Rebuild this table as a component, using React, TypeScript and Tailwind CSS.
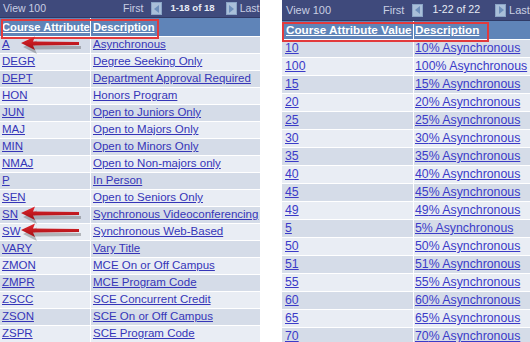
import React from 'react';

const attributes = [
  ['A', 'Asynchronous'],
  ['DEGR', 'Degree Seeking Only'],
  ['DEPT', 'Department Approval Required'],
  ['HON', 'Honors Program'],
  ['JUN', 'Open to Juniors Only'],
  ['MAJ', 'Open to Majors Only'],
  ['MIN', 'Open to Minors Only'],
  ['NMAJ', 'Open to Non-majors only'],
  ['P', 'In Person'],
  ['SEN', 'Open to Seniors Only'],
  ['SN', 'Synchronous Videoconferencing'],
  ['SW', 'Synchronous Web-Based'],
  ['VARY', 'Vary Title'],
  ['ZMON', 'MCE On or Off Campus'],
  ['ZMPR', 'MCE Program Code'],
  ['ZSCC', 'SCE Concurrent Credit'],
  ['ZSON', 'SCE On or Off Campus'],
  ['ZSPR', 'SCE Program Code'],
];

const values = ['10', '100', '15', '20', '25', '30', '35', '40', '45', '49', '5', '50', '51', '55', '60', '65', '70'];

function NavButton({ dir }: { dir: 'left' | 'right' }) {
  return (
    <span className="flex w-[11px] h-[13px] items-center justify-center bg-[#a9bfd9] border border-[#8aa4c6]">
      <svg width="6" height="8" viewBox="0 0 6 8">
        {dir === 'left' ? (
          <polygon points="5,0 5,8 0,4" fill="#6e8fbb" />
        ) : (
          <polygon points="1,0 1,8 6,4" fill="#6e8fbb" />
        )}
      </svg>
    </span>
  );
}

function Arrow({ className }: { className: string }) {
  return (
    <svg className={className} width="64" height="20" viewBox="0 0 64 20">
      <defs>
        <linearGradient id="shaft" x1="0" y1="0" x2="0" y2="1">
          <stop offset="0" stopColor="#e3262c" />
          <stop offset="1" stopColor="#a30e14" />
        </linearGradient>
      </defs>
      <g opacity="0.3" transform="translate(2,4)">
        <polygon points="0,7 14,0.5 12,5.5 58,6 58,9 12,9.5 14,14" fill="#333" />
      </g>
      <polygon points="0,7 14,0.5 12,5.5 58,6 58,9 12,9.5 14,14" fill="url(#shaft)" />
    </svg>
  );
}

export default function App() {
  return (
    <div className="w-[530px] h-[342px] overflow-hidden bg-white flex font-['Liberation_Sans',Arial,sans-serif]">
      {/* left table */}
      <div className="relative w-[260px] shrink-0 text-[11.5px] overflow-hidden">
        <div className="h-[18px] bg-[#3f4a7c] text-[#c9cfe3] text-[10.5px] flex items-center pl-[3px] border-b border-[#2f3a66] whitespace-nowrap">
          <span className="w-[120px] shrink-0">View 100</span>
          <span className="shrink-0">First</span>
          <span className="ml-[8px] shrink-0"><NavButton dir="left" /></span>
          <span className="ml-[8px] shrink-0 text-[#e6eaf4] font-bold text-[9.6px]">1-18 of 18</span>
          <span className="ml-[11px] shrink-0"><NavButton dir="right" /></span>
          <span className="ml-[3px] shrink-0">Last</span>
        </div>
        <div className="h-[19px] bg-[#5f84b8] flex items-center text-white font-bold text-[11.2px] border-b border-white">
          <span className="w-[91px] pl-[2px] underline border-r border-white h-full flex items-center">Course Attribute</span>
          <span className="pl-[2px] underline">Description</span>
        </div>
        {attributes.map(([code, desc], i) => (
          <div
            key={code}
            className={`h-[17px] flex items-center border-b border-white ${i % 2 === 0 ? 'bg-[#d5dce8]' : 'bg-[#e9edf4]'}`}
          >
            <span className="w-[91px] h-full pl-[2px] flex items-center border-r border-white text-[#3535b8] underline">{code}</span>
            <span className="pl-[2px] text-[#3535b8] underline whitespace-nowrap">{desc}</span>
          </div>
        ))}
        <div className="absolute left-[1px] top-[19px] w-[158px] h-[20px] border-2 border-[#e23a3c]" />
        <Arrow className="absolute left-[21px] top-[36px]" />
        <Arrow className="absolute left-[21px] top-[206px]" />
        <Arrow className="absolute left-[21px] top-[223px]" />
      </div>

      {/* right table */}
      <div className="relative w-[248px] ml-[22px] shrink-0 text-[12.3px] overflow-hidden">
        <div className="h-[21px] bg-[#3f4a7c] text-[#c9cfe3] text-[11px] flex items-center pl-[4px] border-b border-[#2f3a66] whitespace-nowrap">
          <span className="w-[97px] shrink-0">View 100</span>
          <span className="shrink-0">First</span>
          <span className="ml-[8px] shrink-0"><NavButton dir="left" /></span>
          <span className="ml-[9px] shrink-0 text-[#e6eaf4] text-[10.6px]">1-22 of 22</span>
          <span className="ml-[15px] shrink-0"><NavButton dir="right" /></span>
          <span className="ml-[3px] shrink-0">Last</span>
        </div>
        <div className="h-[19px] bg-[#5f84b8] flex items-center text-white font-bold text-[11.7px] border-b border-white">
          <span className="w-[132px] pl-[4px] underline border-r border-white h-full flex items-center">Course Attribute Value</span>
          <span className="pl-[1px] underline">Description</span>
        </div>
        {values.map((v, i) => (
          <div
            key={v}
            className={`h-[18px] flex items-center border-b border-white ${i % 2 === 0 ? 'bg-[#d5dce8]' : 'bg-[#e9edf4]'}`}
          >
            <span className="w-[132px] h-full pl-[3px] flex items-center border-r border-white text-[#3b3bc8] underline">{v}</span>
            <span className="pl-[1px] text-[#3b3bc8] underline whitespace-nowrap">{v}% Asynchronous</span>
          </div>
        ))}
        <div className="absolute left-0 top-[22px] w-[207px] h-[20px] border-2 border-[#e23a3c]" />
      </div>
    </div>
  );
}
